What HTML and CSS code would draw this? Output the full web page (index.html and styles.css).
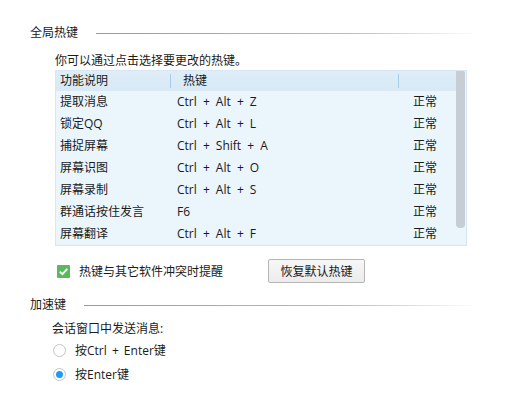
FILE: index.html
```html
<!DOCTYPE html>
<html lang="zh-CN">
<head>
    <meta charset="UTF-8">
    <title>热键设置</title>
    <link rel="stylesheet" href="styles.css">
</head>
<body>
<div class="page">
    <div class="group-title"><span>全局热键</span><i class="rule"></i></div>

    <div class="section">
        <div class="hint">你可以通过点击选择要更改的热键。</div>

        <div class="keytable">
            <div class="grid">
                <div class="row head">
                    <span>功能说明</span>
                    <span class="key">热键</span>
                    <span></span>
                </div>
                <div class="row"><span>提取消息</span><span>Ctrl + Alt + Z</span><span class="state">正常</span></div>
                <div class="row"><span>锁定QQ</span><span>Ctrl + Alt + L</span><span class="state">正常</span></div>
                <div class="row"><span>捕捉屏幕</span><span>Ctrl + Shift + A</span><span class="state">正常</span></div>
                <div class="row"><span>屏幕识图</span><span>Ctrl + Alt + O</span><span class="state">正常</span></div>
                <div class="row"><span>屏幕录制</span><span>Ctrl + Alt + S</span><span class="state">正常</span></div>
                <div class="row"><span>群通话按住发言</span><span>F6</span><span class="state">正常</span></div>
                <div class="row"><span>屏幕翻译</span><span>Ctrl + Alt + F</span><span class="state">正常</span></div>
            </div>
            <div class="scrollbar"><div class="thumb"></div></div>
        </div>

        <div class="options">
            <label class="check">
                <span class="box">
                    <svg width="13" height="13" viewBox="0 0 13 13">
                        <rect width="13" height="13" rx="1" fill="#5cb85c"/>
                        <path d="M2.8 6.6 L5.4 9.2 L10.3 3.8" fill="none" stroke="#fff" stroke-width="1.8"/>
                    </svg>
                </span>
                热键与其它软件冲突时提醒
            </label>
            <button class="btn">恢复默认热键</button>
        </div>
    </div>

    <div class="group-title second"><span>加速键</span><i class="rule"></i></div>

    <div class="send">
        <div class="send-label">会话窗口中发送消息:</div>
        <label class="radio"><span class="dot"></span>按Ctrl + Enter键</label>
        <label class="radio"><span class="dot on"></span>按Enter键</label>
    </div>
</div>
</body>
</html>
```

FILE: styles.css
```css
body {
    margin: 0;
    background-color: #fff;
    font-family: "Open Sans", "Noto Sans CJK SC", sans-serif;
    font-size: 12px;
    color: #1a1a1a;
}

.page {
    padding: 25px 38px 0 30px;
}

.group-title {
    display: flex;
    align-items: center;
    gap: 18px;
    height: 16px;
    line-height: 16px;
}

.group-title .rule {
    flex: 1;
    height: 1px;
    background: linear-gradient(to right, #6fa3d6, #9cc2e6 65%, rgba(255, 255, 255, 0));
}

.group-title.second {
    margin-top: 14px;
}

.section {
    padding-left: 25px;
}

.hint {
    margin-top: 11px;
    height: 18px;
    line-height: 18px;
}

.keytable {
    display: flex;
    width: 412px;
    background-color: #eaf5fc;
    border: 1px solid #d6e6f2;
    box-sizing: border-box;
}

.grid {
    flex: 1;
}

.row {
    display: grid;
    grid-template-columns: 114px 228px 1fr;
    height: 22px;
    line-height: 22px;
}

.row span:first-child {
    padding-left: 4px;
}

.row span:nth-child(2) {
    padding-left: 7px;
    word-spacing: 3px;
}

.row .state {
    padding-left: 15px;
}

.row.head {
    height: 20px;
    line-height: 20px;
    background: linear-gradient(#deedf8, #d8e9f5);
}

.row.head span:nth-child(2),
.row.head span:nth-child(3) {
    border-left: 1px solid #a8cbe8;
    margin: 3px 0;
    line-height: 14px;
}

.row.head .key {
    padding-left: 12px;
}

.scrollbar {
    width: 9px;
    padding-right: 1px;
}

.thumb {
    height: 157px;
    background-color: #c6cdd4;
    border-radius: 0 2px 4px 4px;
}

.options {
    display: flex;
    align-items: center;
    height: 24px;
    margin-top: 13px;
}

.check {
    display: flex;
    align-items: center;
    gap: 9px;
    padding-left: 2px;
    width: 211px;
}

.box {
    display: block;
    width: 13px;
    height: 13px;
}

.box svg {
    display: block;
}

.btn {
    width: 97px;
    height: 24px;
    padding: 0;
    font-family: inherit;
    font-size: 12px;
    color: #1a1a1a;
    background: linear-gradient(#f7f7f7, #ececec);
    border: 1px solid #b5b5b5;
    border-radius: 2px;
}

.send {
    padding-left: 22px;
}

.send-label {
    margin-top: 7px;
    height: 18px;
    line-height: 18px;
}

.radio {
    display: flex;
    align-items: center;
    gap: 9px;
    height: 24px;
    padding-left: 1px;
    word-spacing: 2px;
}

.dot {
    width: 11px;
    height: 11px;
    border: 1px solid #c4c4c4;
    border-radius: 50%;
    background-color: #fff;
    position: relative;
}

.dot.on::after {
    content: "";
    position: absolute;
    left: 2px;
    top: 2px;
    width: 7px;
    height: 7px;
    border-radius: 50%;
    background-color: #1e9cf5;
}
```
